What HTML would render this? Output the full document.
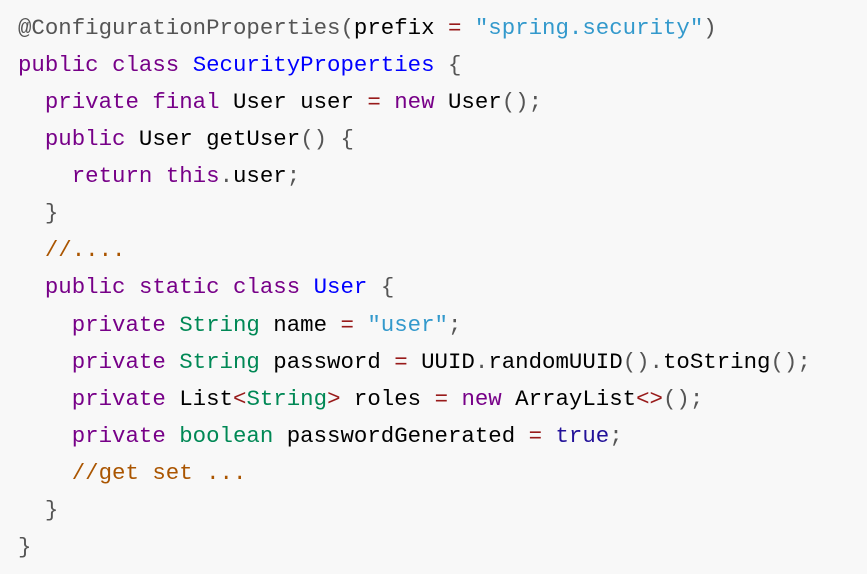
<!DOCTYPE html>
<html><head><meta charset="utf-8"><style>
html,body{margin:0;padding:0;width:867px;height:574px;overflow:hidden;background:#f8f8f8;}
pre{margin:0;padding:10px 0 0 18px;font-family:"Liberation Mono",monospace;font-size:22.4px;line-height:37.07px;color:#000;}
.k{color:#770088}.d{color:#555}.c{color:#0000ff}.o{color:#981a1a}.s{color:#3399cc}.m{color:#aa5500}.t{color:#008855}.a{color:#221199}.p{color:#555}
</style></head><body><pre><span class="d">@ConfigurationProperties</span><span class="p">(</span>prefix <span class="o">=</span> <span class="s">"spring.security"</span><span class="p">)</span>
<span class="k">public</span> <span class="k">class</span> <span class="c">SecurityProperties</span> <span class="p">{</span>
  <span class="k">private</span> <span class="k">final</span> User user <span class="o">=</span> <span class="k">new</span> User<span class="p">();</span>
  <span class="k">public</span> User getUser<span class="p">()</span> <span class="p">{</span>
    <span class="k">return</span> <span class="k">this</span><span class="p">.</span>user<span class="p">;</span>
  <span class="p">}</span>
  <span class="m">//....</span>
  <span class="k">public</span> <span class="k">static</span> <span class="k">class</span> <span class="c">User</span> <span class="p">{</span>
    <span class="k">private</span> <span class="t">String</span> name <span class="o">=</span> <span class="s">"user"</span><span class="p">;</span>
    <span class="k">private</span> <span class="t">String</span> password <span class="o">=</span> UUID<span class="p">.</span>randomUUID<span class="p">().</span>toString<span class="p">();</span>
    <span class="k">private</span> List<span class="o">&lt;</span><span class="t">String</span><span class="o">&gt;</span> roles <span class="o">=</span> <span class="k">new</span> ArrayList<span class="o">&lt;&gt;</span><span class="p">();</span>
    <span class="k">private</span> <span class="t">boolean</span> passwordGenerated <span class="o">=</span> <span class="a">true</span><span class="p">;</span>
    <span class="m">//get set ...</span>
  <span class="p">}</span>
<span class="p">}</span></pre></body></html>
